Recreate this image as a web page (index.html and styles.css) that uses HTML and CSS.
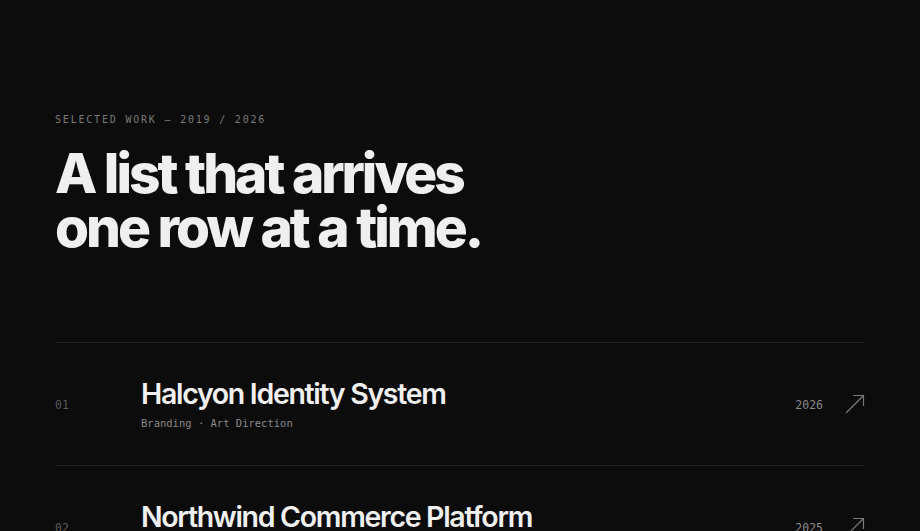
FILE: index.html
```html
<!DOCTYPE html>
<html lang="en">
<head>
<meta charset="utf-8">
<title>Selected Work</title>
<link rel="stylesheet" href="styles.css">
</head>
<body>
<main class="page">
  <header class="intro">
    <p class="eyebrow">Selected Work — 2019 / 2026</p>
    <h1 class="headline"><span class="line">A list that arrives</span><span class="line">one row at a time.</span></h1>
  </header>
  <ul class="work-list">
    <li class="work-row">
      <span class="work-index">01</span>
      <div class="work-main">
        <h2 class="work-title">Halcyon Identity System</h2>
        <p class="work-tags">Branding · Art Direction</p>
      </div>
      <span class="work-year">2026</span>
      <svg class="work-arrow" width="20" height="20" viewBox="0 0 20 20" fill="none" stroke="currentColor" stroke-width="1.2" stroke-linecap="round" stroke-linejoin="round"><path d="M1.5 18.5 L18.5 1.5 M8.5 1.5 H18.5 V11.5"/></svg>
    </li>
    <li class="work-row">
      <span class="work-index">02</span>
      <div class="work-main">
        <h2 class="work-title">Northwind Commerce Platform</h2>
        <p class="work-tags">Product Design · Engineering</p>
      </div>
      <span class="work-year">2025</span>
      <svg class="work-arrow" width="20" height="20" viewBox="0 0 20 20" fill="none" stroke="currentColor" stroke-width="1.2" stroke-linecap="round" stroke-linejoin="round"><path d="M1.5 18.5 L18.5 1.5 M8.5 1.5 H18.5 V11.5"/></svg>
    </li>
  </ul>
</main>
</body>
</html>
```
FILE: styles.css
```css
* { box-sizing: border-box; }
html, body {
  margin: 0;
  padding: 0;
  background: #0c0c0c;
  color: #efefef;
  height: 100%;
  overflow: hidden;
}
body {
  font-family: Inter, "Noto Sans", sans-serif;
}
.page {
  padding: 113px 55px 0 55px;
}
.intro {
  margin: 0;
}
.eyebrow {
  margin: 0;
  font-family: "DejaVu Sans Mono", "Liberation Mono", monospace;
  font-size: 10px;
  line-height: 14px;
  letter-spacing: 1.8px;
  text-transform: uppercase;
  color: #7a7a7a;
}
.headline {
  margin: 19px 0 0 0;
  font-size: 55px;
  font-weight: 800;
  letter-spacing: -0.055em;
  word-spacing: 0.01em;
  color: #efefef;
}
.headline .line {
  display: block;
  height: 54px;
  line-height: 54px;
}
.work-list {
  list-style: none;
  margin: 88px 0 0 0;
  padding: 0;
  width: 810px;
}
.work-row {
  display: flex;
  align-items: center;
  border-top: 1px solid #232323;
  padding: 33px 0;
  min-height: 123px;
}
.work-index {
  width: 86px;
  flex: none;
  font-family: "DejaVu Sans Mono", "Liberation Mono", monospace;
  font-size: 11.5px;
  color: #5a5a5a;
  padding-top: 2px;
}
.work-main {
  flex: 1;
}
.work-title {
  margin: 0;
  font-size: 28.5px;
  line-height: 34px;
  font-weight: 600;
  letter-spacing: -0.046em;
  color: #f0f0f0;
}
.work-tags {
  margin: 4px 0 0 0;
  font-family: "DejaVu Sans Mono", "Liberation Mono", monospace;
  font-size: 10.5px;
  line-height: 16px;
  color: #8a8a8a;
}
.work-year {
  flex: none;
  font-family: "DejaVu Sans Mono", "Liberation Mono", monospace;
  font-size: 11.5px;
  color: #8a8a8a;
  margin-right: 22px;
  padding-top: 2px;
}
.work-arrow {
  flex: none;
  color: #7a7a7a;
  display: block;
}
```
